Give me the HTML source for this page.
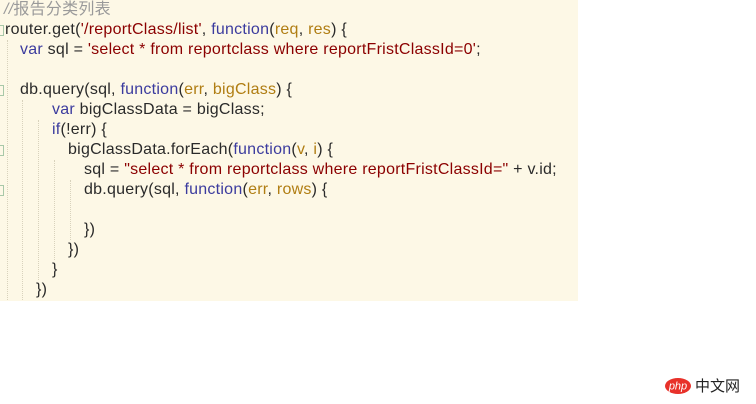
<!DOCTYPE html>
<html><head><meta charset="utf-8"><style>
body{margin:0;width:756px;height:404px;background:#fff;position:relative;overflow:hidden;font-family:"Liberation Sans","Noto Sans CJK SC",sans-serif;}
.code{position:absolute;left:0;top:0;width:578px;height:301px;background:#fdf8e6;}
.l{position:absolute;height:20px;line-height:20px;font-size:16px;letter-spacing:0.25px;color:#2a2a2a;white-space:pre;}
.c{color:#9a9a9a}
.s{color:#8b0000}
.k{color:#3b3b9e}
.p{color:#b07d12}
.g{position:absolute;border-left:1px dotted #d8d2bc;}
.m{position:absolute;left:0;width:3px;height:9px;border:1px solid #a8c8a8;border-left:none;}
.logo{position:absolute;left:665px;top:376px;}
</style></head><body>
<div class="code">
<div class="g" style="left:7px;top:40px;height:260px"></div>
<div class="g" style="left:22px;top:100px;height:200px"></div>
<div class="g" style="left:38px;top:120px;height:160px"></div>
<div class="g" style="left:54px;top:160px;height:100px"></div>
<div class="g" style="left:70px;top:180px;height:60px"></div>
<div class="m" style="top:25px"></div>
<div class="m" style="top:85px"></div>
<div class="m" style="top:145px"></div>
<div class="m" style="top:185px"></div>
<div class="l c" style="left:4px;top:0"><i>//</i>报告分类列表</div>
<div class="l" style="left:5px;top:20px">router.get(<span class="s">'/reportClass/list'</span>, <span class="k">function</span>(<span class="p">req</span>, <span class="p">res</span>) {</div>
<div class="l" style="left:20px;top:40px"><span class="k">var</span> sql = <span class="s">'select * from reportclass where reportFristClassId=0'</span>;</div>
<div class="l" style="left:20px;top:80px">db.query(sql, <span class="k">function</span>(<span class="p">err</span>, <span class="p">bigClass</span>) {</div>
<div class="l" style="left:52px;top:100px"><span class="k">var</span> bigClassData = bigClass;</div>
<div class="l" style="left:52px;top:120px"><span class="k">if</span>(!err) {</div>
<div class="l" style="left:68px;top:140px">bigClassData.forEach(<span class="k">function</span>(<span class="p">v</span>, <span class="p">i</span>) {</div>
<div class="l" style="left:84px;top:160px">sql = <span class="s">"select * from reportclass where reportFristClassId="</span> + v.id;</div>
<div class="l" style="left:84px;top:180px">db.query(sql, <span class="k">function</span>(<span class="p">err</span>, <span class="p">rows</span>) {</div>
<div class="l" style="left:84px;top:220px">})</div>
<div class="l" style="left:68px;top:240px">})</div>
<div class="l" style="left:52px;top:260px">}</div>
<div class="l" style="left:36px;top:280px">})</div>
</div>
<div class="logo">
<svg width="82" height="20" viewBox="0 0 82 20">
<ellipse cx="13" cy="10" rx="13" ry="8" fill="#e8312a"/>
<text x="13" y="13.5" font-family="Liberation Sans" font-size="11" font-style="italic" fill="#fff" text-anchor="middle">php</text>
<text x="30" y="15" font-family="Noto Sans CJK SC" font-size="15" fill="#222">中文网</text>
</svg>
</div>
</body></html>
